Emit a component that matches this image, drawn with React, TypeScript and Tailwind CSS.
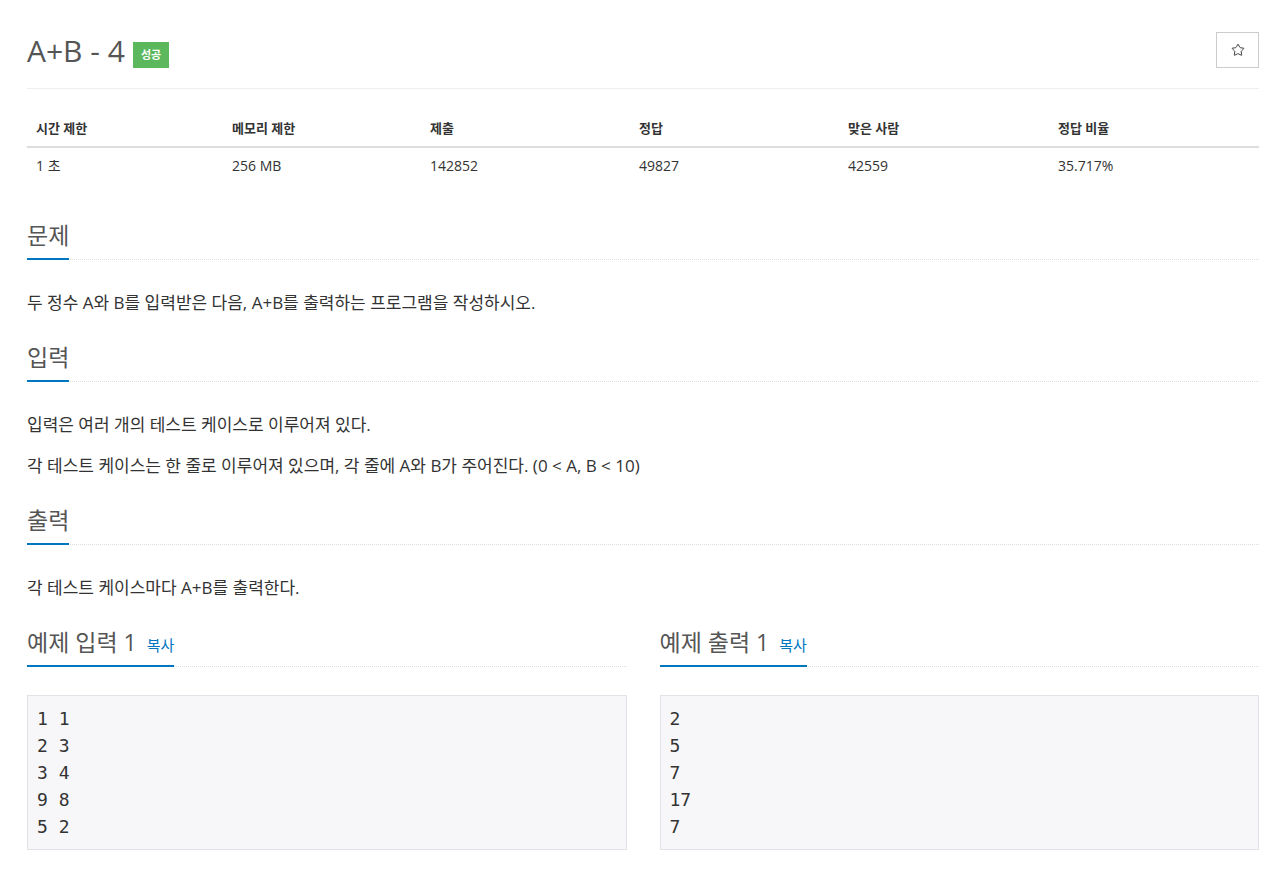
import { Star } from "lucide-react";

const stats = [
  ["시간 제한", "1 초"],
  ["메모리 제한", "256 MB"],
  ["제출", "142852"],
  ["정답", "49827"],
  ["맞은 사람", "42559"],
  ["정답 비율", "35.717%"],
];

const sampleInput = "1 1\n2 3\n3 4\n9 8\n5 2";
const sampleOutput = "2\n5\n7\n17\n7";

function Headline({ children }: { children: React.ReactNode }) {
  return (
    <div className="border-b border-dotted border-[#ddd]">
      <h2 className="inline-flex items-baseline -mb-px border-b-2 border-[#0076c0] pb-[6px] text-[23px] leading-[34px] font-normal text-[#555]">
        {children}
      </h2>
    </div>
  );
}

function Sample({ title, data }: { title: string; data: string }) {
  return (
    <div className="flex-1 min-w-0">
      <Headline>
        <span className="leading-[34px]">{title}</span>
        <a className="ml-[10px] text-[15px] leading-[20px] text-[#0076c0] cursor-pointer">복사</a>
      </Headline>
      <pre className="mt-[28px] bg-[#f7f7f9] border border-[#e1e1e8] px-[9px] py-[9px] text-[18px] leading-[27px] text-[#333] font-['DejaVu_Sans_Mono',monospace]">
        {data}
      </pre>
    </div>
  );
}

function Section({
  title,
  paragraphs,
  first,
}: {
  title: string;
  paragraphs: React.ReactNode[];
  first?: boolean;
}) {
  return (
    <section className={first ? "mt-[34px]" : "mt-[22px]"}>
      <Headline>{title}</Headline>
      <div className="mt-[28px] flex flex-col gap-[11px] text-[17px]">
        {paragraphs.map((p, i) => (
          <p key={i} className="leading-[30px]">
            {p}
          </p>
        ))}
      </div>
    </section>
  );
}

export default function App() {
  return (
    <div className="min-h-screen bg-white pl-[27px] pr-[21px] pb-10 text-[#333] font-['Open_Sans','Noto_Sans_CJK_KR',sans-serif]">
      <div className="flex items-start justify-between pt-[32px]">
        <div className="flex items-center pt-[2px]">
          <h1 className="text-[30px] leading-[30px] font-normal text-[#555]">A+B - 4</h1>
          <span className="ml-[8px] mt-[8px] bg-[#5cb85c] px-[8px] h-[26px] flex items-center text-[11px] font-bold text-white">
            성공
          </span>
        </div>
        <button className="w-[43px] h-[36px] border border-[#ccc] flex items-center justify-center text-[#333]">
          <Star size={14} strokeWidth={1.6} />
        </button>
      </div>
      <div className="mt-[20px] h-px bg-[#eee]" />

      <div className="mt-[21px] text-[14px]">
        <div className="grid grid-cols-[196px_198px_209px_209px_210px_1fr] border-b-2 border-[#ddd]">
          {stats.map(([label]) => (
            <div key={label} className="px-[9px] py-[8px] leading-[20px] font-bold text-[13px]">
              {label}
            </div>
          ))}
        </div>
        <div className="grid grid-cols-[196px_198px_209px_209px_210px_1fr]">
          {stats.map(([label, value]) => (
            <div key={label} className="px-[9px] py-[8px] leading-[20px]">
              {value}
            </div>
          ))}
        </div>
      </div>

      <Section
        first
        title="문제"
        paragraphs={["두 정수 A와 B를 입력받은 다음, A+B를 출력하는 프로그램을 작성하시오."]}
      />
      <Section
        title="입력"
        paragraphs={[
          "입력은 여러 개의 테스트 케이스로 이루어져 있다.",
          "각 테스트 케이스는 한 줄로 이루어져 있으며, 각 줄에 A와 B가 주어진다. (0 < A, B < 10)",
        ]}
      />
      <Section title="출력" paragraphs={["각 테스트 케이스마다 A+B를 출력한다."]} />

      <div className="mt-[22px] flex gap-[33px]">
        <Sample title="예제 입력 1" data={sampleInput} />
        <Sample title="예제 출력 1" data={sampleOutput} />
      </div>
    </div>
  );
}
